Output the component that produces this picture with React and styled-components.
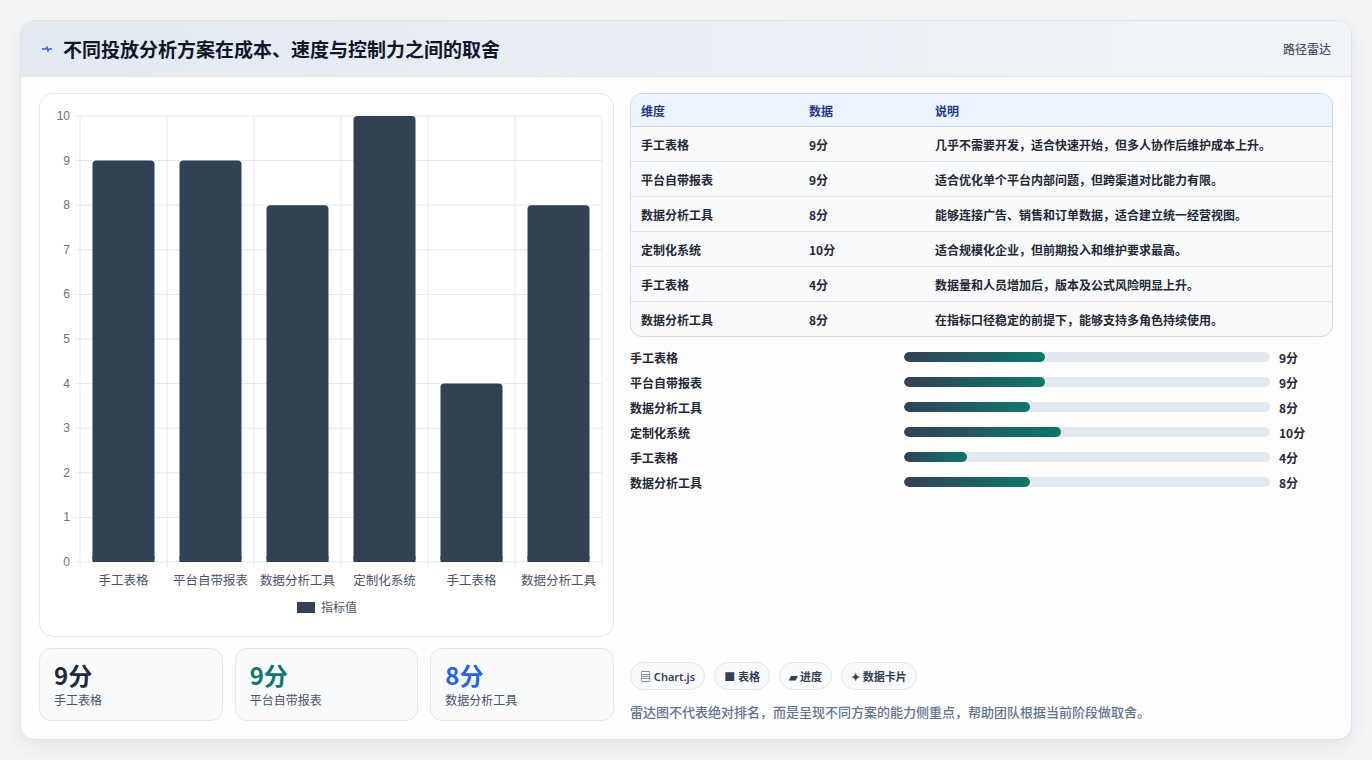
import React from "react";
import styled, { createGlobalStyle } from "styled-components";

const rows = [
  { name: "手工表格", v: 9, note: "几乎不需要开发，适合快速开始，但多人协作后维护成本上升。" },
  { name: "平台自带报表", v: 9, note: "适合优化单个平台内部问题，但跨渠道对比能力有限。" },
  { name: "数据分析工具", v: 8, note: "能够连接广告、销售和订单数据，适合建立统一经营视图。" },
  { name: "定制化系统", v: 10, note: "适合规模化企业，但前期投入和维护要求最高。" },
  { name: "手工表格", v: 4, note: "数据量和人员增加后，版本及公式风险明显上升。" },
  { name: "数据分析工具", v: 8, note: "在指标口径稳定的前提下，能够支持多角色持续使用。" },
];

const Global = createGlobalStyle`
  body { margin: 0; background: #f3f4f6; font-family: "Noto Sans CJK SC", "Noto Sans", sans-serif; }
`;

const Page = styled.div`
  width: 1372px; height: 760px; box-sizing: border-box; padding: 20px 20px 20px 20px;
  background: #f4f5f7;
`;
const Card = styled.div`
  height: 720px; box-sizing: border-box; background: #fdfdfe; border: 1px solid #dfe3ea;
  border-radius: 14px; box-shadow: 0 6px 18px rgba(15,23,42,0.08); overflow: hidden;
  display: flex; flex-direction: column;
`;
const Header = styled.div`
  height: 55px; display: flex; align-items: center; justify-content: space-between;
  padding: 0 20px; background: linear-gradient(90deg, #e3e9f1, #f1f4f8);
  border-bottom: 1px solid #e2e8f0;
`;
const Title = styled.h1`
  margin: 0; font-size: 19px; font-weight: 700; color: #0f172a; display: flex; align-items: center; gap: 10px;
`;
const Tag = styled.span` font-size: 12px; color: #475569; font-weight: 500; `;
const Body = styled.div`
  flex: 1; display: grid; grid-template-columns: 575px 1fr; gap: 16px; padding: 16px 18px 18px 18px;
`;
const Col = styled.div` display: flex; flex-direction: column; gap: 11px; `;
const Panel = styled.div`
  height: 544px; box-sizing: border-box; border: 1px solid #e2e8f0; border-radius: 14px; background: #fff;
`;
const Stats = styled.div` display: grid; grid-template-columns: repeat(3, 1fr); gap: 12px; `;
const Stat = styled.div`
  height: 73px; box-sizing: border-box; border: 1px solid #e2e8f0; border-radius: 12px;
  background: #f8fafc; padding: 10px 14px;
`;
const StatNum = styled.div` font-size: 24px; font-weight: 700; color: ${p => p.c}; line-height: 32px; `;
const StatLabel = styled.div` font-size: 12px; color: #475569; `;
const Table = styled.table`
  width: 100%; border-collapse: separate; border-spacing: 0; border: 1px solid #cfd8e3;
  border-radius: 12px; overflow: hidden; font-size: 12px; font-weight: 600; background: #f8fafc;
  th { background: #edf4fd; color: #1e3a8a; text-align: left; height: 32px; padding: 0 10px; border-bottom: 1px solid #cfd8e3; }
  td { height: 34px; padding: 0 10px; color: #1f2937; border-bottom: 1px solid #e2e8f0; }
  tr:last-child td { border-bottom: none; }
`;
const Bars = styled.div` display: flex; flex-direction: column; gap: 7px; margin-top: 11px; `;
const BarRow = styled.div`
  display: grid; grid-template-columns: 265px 366px 1fr; align-items: center; gap: 9px;
  font-size: 12px; font-weight: 600; color: #1f2937; height: 18px;
`;
const Track = styled.div` height: 10px; border-radius: 5px; background: #e2e8f0; overflow: hidden; `;
const Fill = styled.div` height: 100%; border-radius: 5px; background: linear-gradient(90deg, #334155, #0f766e); `;
const Chips = styled.div` display: flex; gap: 9px; margin-top: auto; `;
const Chip = styled.span`
  font-size: 11px; font-weight: 600; color: #334155; border: 1px solid #e2e8f0; background: #f8fafc;
  border-radius: 14px; padding: 5px 9px; font-family: "Noto Sans", "Noto Sans CJK SC", sans-serif;
`;
const Foot = styled.p` margin: 12px 0 0; font-size: 13px; color: #64748b; font-weight: 500; `;

const Chart = () => {
  const x0 = 40, x1 = 562, y0 = 22, y1 = 468, cw = (x1 - x0) / 6;
  const y = v => y1 - (v / 10) * (y1 - y0);
  return (
    <svg width="573" height="542">
      {Array.from({ length: 11 }, (_, i) => (
        <g key={i}>
          <line x1={x0 - 5} x2={x1} y1={y(i)} y2={y(i)} stroke="#e5e7eb" />
          <text x={x0 - 10} y={y(i) + 4} fontSize="12" fill="#64748b" textAnchor="end" fontFamily="Liberation Sans, sans-serif">{i}</text>
        </g>
      ))}
      {Array.from({ length: 7 }, (_, i) => (
        <line key={i} x1={x0 + i * cw} x2={x0 + i * cw} y1={y0} y2={y1 + 5} stroke="#e5e7eb" />
      ))}
      {rows.map((r, i) => (
        <g key={i}>
          <rect x={x0 + i * cw + 12.5} y={y(r.v)} width={cw - 25} height={y1 - y(r.v)} rx="4" fill="#334155" />
          <rect x={x0 + i * cw + 12.5} y={y1 - 6} width={cw - 25} height="6" fill="#334155" />
          <text x={x0 + i * cw + cw / 2} y={y1 + 23} fontSize="12.5" fill="#475569" textAnchor="middle">{r.name}</text>
        </g>
      ))}
      <rect x="257" y="508" width="18" height="11" fill="#334155" />
      <text x="281" y="518" fontSize="12" fill="#475569">指标值</text>
    </svg>
  );
};

export default function App() {
  return (
    <Page>
      <Global />
      <Card>
        <Header>
          <Title>
            <svg width="12" height="12" viewBox="0 0 12 12"><path d="M1 6 L5 6 L6 4 L7 8 L8 6 L11 6" stroke="#2563eb" strokeWidth="1.3" fill="none" /></svg>
            不同投放分析方案在成本、速度与控制力之间的取舍
          </Title>
          <Tag>路径雷达</Tag>
        </Header>
        <Body>
          <Col>
            <Panel><Chart /></Panel>
            <Stats>
              <Stat><StatNum c="#1e293b">9分</StatNum><StatLabel>手工表格</StatLabel></Stat>
              <Stat><StatNum c="#0f766e">9分</StatNum><StatLabel>平台自带报表</StatLabel></Stat>
              <Stat><StatNum c="#2563eb">8分</StatNum><StatLabel>数据分析工具</StatLabel></Stat>
            </Stats>
          </Col>
          <Col style={{ gap: 0 }}>
            <Table>
              <thead><tr><th style={{ width: 148 }}>维度</th><th style={{ width: 106 }}>数据</th><th>说明</th></tr></thead>
              <tbody>
                {rows.map((r, i) => <tr key={i}><td>{r.name}</td><td>{r.v}分</td><td>{r.note}</td></tr>)}
              </tbody>
            </Table>
            <Bars>
              {rows.map((r, i) => (
                <BarRow key={i}>
                  <span>{r.name}</span>
                  <Track><Fill style={{ width: `${(r.v / 23.3) * 100}%` }} /></Track>
                  <span>{r.v}分</span>
                </BarRow>
              ))}
            </Bars>
            <Chips>
              <Chip>▤ Chart.js</Chip><Chip>■ 表格</Chip><Chip>▰ 进度</Chip><Chip>✦ 数据卡片</Chip>
            </Chips>
            <Foot>雷达图不代表绝对排名，而是呈现不同方案的能力侧重点，帮助团队根据当前阶段做取舍。</Foot>
          </Col>
        </Body>
      </Card>
    </Page>
  );
}
